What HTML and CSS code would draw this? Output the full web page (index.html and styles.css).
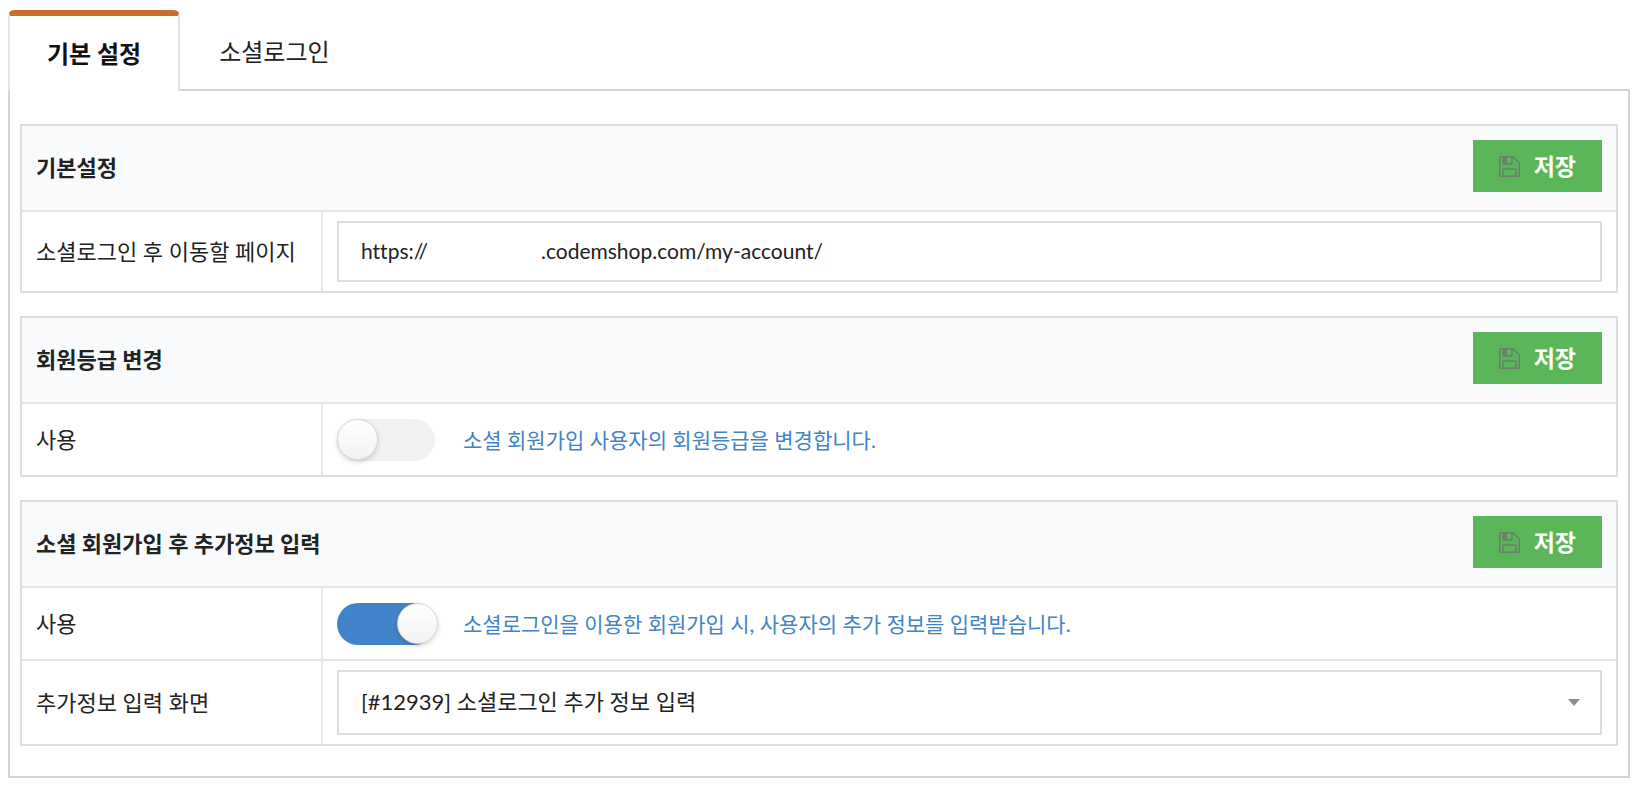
FILE: index.html
```html
<!DOCTYPE html>
<html lang="ko">
<head>
    <meta charset="UTF-8">
    <meta name="viewport" content="width=device-width, initial-scale=1.0">
    <title>소셜로그인 설정</title>
    <link rel="stylesheet" href="styles.css">
</head>
<body>
    <svg class="sprite" aria-hidden="true">
        <symbol id="icon-save" viewBox="0 0 21 21">
            <path d="M1.5 .75H14L20.25 7V19.5a.75.75 0 0 1-.75.75H1.5a.75.75 0 0 1-.75-.75V1.5A.75.75 0 0 1 1.5.75z" fill="none" stroke="currentColor" stroke-width="1.5"/>
            <path d="M4 1V7.3a.7.7 0 0 0 .7.7H12.3a.7.7 0 0 0 .7-.7V1M4 20V13.7a.7.7 0 0 1 .7-.7H16.3a.7.7 0 0 1 .7.7V20" fill="none" stroke="currentColor" stroke-width="1.5"/>
            <path d="M4 1H8V8H4z" fill="currentColor"/>
        </symbol>
    </svg>

    <div class="tabs" role="tablist">
        <button type="button" class="tab active" role="tab" aria-selected="true">기본 설정</button>
        <button type="button" class="tab" role="tab" aria-selected="false">소셜로그인</button>
    </div>

    <form class="panel">
        <!-- 기본설정 -->
        <section class="card">
            <div class="card-header">
                <h2>기본설정</h2>
                <button type="button" class="save"><svg class="icon"><use href="#icon-save"/></svg>저장</button>
            </div>
            <div class="row">
                <label class="name" for="redirect">소셜로그인 후 이동할 페이지</label>
                <div class="field">
                    <input type="text" class="text url" id="redirect" value="https://                     .codemshop.com/my-account/">
                </div>
            </div>
        </section>

        <!-- 회원등급 변경 -->
        <section class="card">
            <div class="card-header">
                <h2>회원등급 변경</h2>
                <button type="button" class="save"><svg class="icon"><use href="#icon-save"/></svg>저장</button>
            </div>
            <div class="row">
                <label class="name" for="use-grade">사용</label>
                <div class="field switch">
                    <input type="checkbox" class="toggle" id="use-grade">
                    <span class="hint">소셜 회원가입 사용자의 회원등급을 변경합니다.</span>
                </div>
            </div>
        </section>

        <!-- 추가정보 입력 -->
        <section class="card">
            <div class="card-header">
                <h2>소셜 회원가입 후 추가정보 입력</h2>
                <button type="button" class="save"><svg class="icon"><use href="#icon-save"/></svg>저장</button>
            </div>
            <div class="row">
                <label class="name" for="use-extra">사용</label>
                <div class="field switch">
                    <input type="checkbox" class="toggle" id="use-extra" checked>
                    <span class="hint">소셜로그인을 이용한 회원가입 시, 사용자의 추가 정보를 입력받습니다.</span>
                </div>
            </div>
            <div class="row">
                <label class="name" for="extra-page">추가정보 입력 화면</label>
                <div class="field dropdown">
                    <select class="text" id="extra-page">
                        <option>[#12939] 소셜로그인 추가 정보 입력</option>
                    </select>
                </div>
            </div>
        </section>
    </form>
</body>
</html>
```
FILE: styles.css
```css
*, *::before, *::after {
    box-sizing: border-box;
}
body {
    margin: 10px 4px 12px 8px;
    background-color: #fff;
    color: #222;
    font-family: Lato, "Noto Sans CJK KR", sans-serif;
    font-size: 22px;
    line-height: 32px;
}
button, input, select {
    font: inherit;
    color: inherit;
}
.sprite {
    display: none;
}

/* Tabs */
.tabs {
    display: flex;
}
.tab {
    height: 79px;
    padding: 2px 37px 0;
    border: 2px solid transparent;
    border-bottom: none;
    background: none;
    font-size: 24px;
    cursor: pointer;
}
.tab.active {
    height: 81px;
    margin-bottom: -2px;
    padding-top: 0;
    border-color: #e4e4e4;
    border-top: 6px solid #c66e2e;
    border-radius: 6px 6px 0 0;
    background-color: #fff;
    color: #111;
    font-weight: 700;
    z-index: 1;
}

.panel {
    display: flex;
    flex-direction: column;
    gap: 23px;
    padding: 33px 10px 30px;
    border: 2px solid #d4d4d5;
}

/* Cards */
.card {
    border: 2px solid #dddede;
}
.card-header {
    display: flex;
    justify-content: space-between;
    align-items: flex-start;
    height: 84px;
    padding: 14px;
    border-radius: 6px 6px 0 0;
    background-color: #f9fafc;
}
.card-header h2 {
    margin: 0;
    font-size: 22px;
    line-height: 56px;
}
.save {
    display: flex;
    align-items: center;
    height: 52px;
    padding: 0 26px;
    border: none;
    background-color: #5ab658;
    color: #fff;
    font-size: 23px;
    font-weight: 700;
    line-height: 50px;
    cursor: pointer;
}
.save .icon {
    width: 21px;
    height: 21px;
    margin-right: 14px;
    color: #6b806a;
}
.row {
    display: grid;
    grid-template-columns: 301px 1fr;
    border-top: 2px solid #e5e6e6;
}
.name {
    display: flex;
    align-items: center;
    padding: 0 14px;
    border-right: 2px solid #e8e8e8;
}
.field {
    padding: 9px 14px;
}

/* Text box and drop-down */
.text {
    display: block;
    width: 100%;
    height: 61px;
    padding: 0 22px 2px;
    border: 2px solid #dddede;
    border-radius: 0;
    background-color: #fff;
    font-variant-ligatures: none;
}
.url {
    font-size: 21px;
}
.dropdown {
    display: grid;
    align-items: center;
}
.dropdown::after {
    content: "";
    grid-area: 1 / 1;
    justify-self: end;
    margin-right: 22px;
    border: 6px solid transparent;
    border-top: 7px solid #8d8d8d;
    border-bottom: none;
    pointer-events: none;
}
.dropdown .text {
    grid-area: 1 / 1;
    height: 65px;
    appearance: none;
}

/* Toggle */
.switch {
    display: flex;
    align-items: center;
    gap: 28px;
    height: 71px;
}
.toggle {
    appearance: none;
    display: flex;
    width: 98px;
    height: 42px;
    margin: 0;
    border-radius: 21px;
    background-color: #f1f1f1;
    cursor: pointer;
}
.toggle::before {
    content: "";
    flex-shrink: 0;
    width: 41px;
    height: 41px;
    border: 1px solid #d4d4d5;
    border-radius: 50%;
    background: linear-gradient(#fff, #f2f2f2);
    box-shadow: 0 2px 4px rgba(34, 36, 38, .2);
}
.toggle:checked {
    background-color: #4183c9;
}
.toggle:checked::before {
    margin-left: 60px;
}
.hint {
    color: #4183c9;
    font-size: 21px;
}
```
